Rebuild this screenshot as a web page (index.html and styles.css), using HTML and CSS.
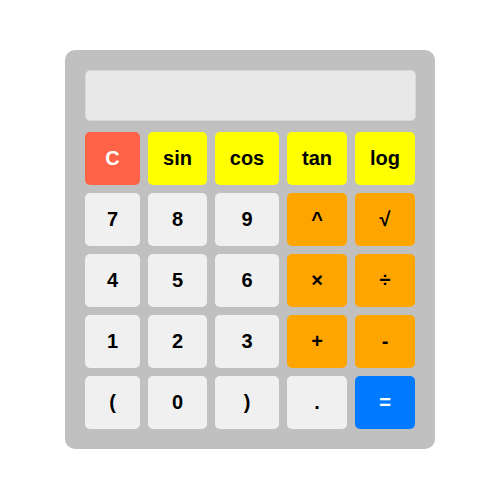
FILE: index.html
```html
<!DOCTYPE html>
<html>
<head>
<meta charset="utf-8">
<link rel="stylesheet" href="styles.css">
</head>
<body>
<div class="calculator">
  <div class="display"></div>
  <div class="keys">
    <button class="key clear">C</button>
    <button class="key func">sin</button>
    <button class="key func">cos</button>
    <button class="key func">tan</button>
    <button class="key func">log</button>
    <button class="key">7</button>
    <button class="key">8</button>
    <button class="key">9</button>
    <button class="key op">^</button>
    <button class="key op">√</button>
    <button class="key">4</button>
    <button class="key">5</button>
    <button class="key">6</button>
    <button class="key op">×</button>
    <button class="key op">÷</button>
    <button class="key">1</button>
    <button class="key">2</button>
    <button class="key">3</button>
    <button class="key op">+</button>
    <button class="key op">-</button>
    <button class="key">(</button>
    <button class="key">0</button>
    <button class="key">)</button>
    <button class="key">.</button>
    <button class="key equals">=</button>
  </div>
</div>
</body>
</html>
```

FILE: styles.css
```css
html, body {
  margin: 0;
  padding: 0;
  background: #ffffff;
}
body {
  padding-top: 50px;
  font-family: "Liberation Sans", Arial, sans-serif;
}
.calculator {
  width: 370px;
  box-sizing: border-box;
  margin: 0 auto;
  padding: 20px;
  background: #c0c0c0;
  border-radius: 10px;
}
.display {
  width: 331px;
  height: 51px;
  box-sizing: border-box;
  background: #e8e8e8;
  border: 1px solid #d8d8d8;
  border-radius: 5px;
  margin-bottom: 11px;
}
.keys {
  display: grid;
  grid-template-columns: 55px 59px 64px 60px 60px;
  grid-auto-rows: 53px;
  gap: 8px;
}
.key {
  border: none;
  border-radius: 5px;
  padding: 0;
  margin: 0;
  background: #f0f0f0;
  color: #000000;
  font-family: "Liberation Sans", Arial, sans-serif;
  font-size: 20px;
  font-weight: bold;
  line-height: 23px;
  display: flex;
  align-items: center;
  justify-content: center;
}
.clear {
  background: #ff6347;
  color: #ffffff;
}
.func {
  background: #ffff00;
}
.op {
  background: #ffa500;
}
.equals {
  background: #007bff;
  color: #ffffff;
}
```
